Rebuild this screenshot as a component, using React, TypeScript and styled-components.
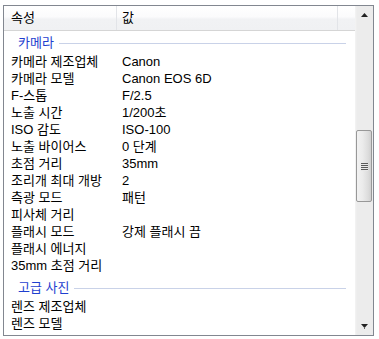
import React from "react";
import styled, { createGlobalStyle } from "styled-components";

const Global = createGlobalStyle`
  html, body { margin: 0; padding: 0; background: #ffffff; }
  body { font-family: "Liberation Sans", "Noto Sans CJK KR", sans-serif; font-size: 13px; color: #000; }
`;

const Page = styled.div`
  padding: 5px 0 0 3px;
`;

const Frame = styled.div`
  width: 369px;
  height: 329px;
  border: 1px solid #828790;
  display: flex;
  overflow: hidden;
  background: #fff;
`;

const Main = styled.div`
  width: 351px;
  display: flex;
  flex-direction: column;
  overflow: hidden;
`;

const Header = styled.div`
  height: 24px;
  display: grid;
  grid-template-columns: 113px 221px 1fr;
  border-bottom: 1px solid #d5d5d5;
  background: linear-gradient(to bottom, #ffffff 0%, #fbfbfc 45%, #f1f2f4 55%, #f0f1f3 100%);
`;

const HeaderCell = styled.div<{ $pad: number }>`
  display: flex;
  align-items: center;
  padding-left: ${(p) => p.$pad}px;
  border-right: 1px solid #e2e4e8;
  line-height: 16px;
`;

const Body = styled.div`
  padding-top: 2px;
  display: flex;
  flex-direction: column;
`;

const GroupHeader = styled.div<{ $first?: boolean }>`
  height: 20px;
  line-height: 16px;
  margin-top: ${(p) => (p.$first ? 0 : 4)}px;
  display: flex;
  align-items: center;
  padding-left: 14px;
  padding-right: 9px;
  color: #1f3fcf;
`;

const GroupLine = styled.div`
  flex: 1;
  height: 1px;
  margin-left: 5px;
  background: #c9d2e8;
`;

const Row = styled.div`
  height: 17px;
  line-height: 16px;
  display: grid;
  grid-template-columns: 113px 1fr;
  align-items: center;
  white-space: nowrap;
`;

const NameCell = styled.div`
  padding-left: 7px;
`;

const ValueCell = styled.div`
  padding-left: 5px;
`;

const ScrollBar = styled.div`
  width: 18px;
  display: flex;
  flex-direction: column;
  background: linear-gradient(to right, #f4f4f4 0px, #ececec 2px, #ececec 100%);
`;

const ArrowButton = styled.div`
  height: 17px;
  display: flex;
  align-items: center;
  justify-content: center;
`;

const Track = styled.div`
  flex: 1;
  padding: 107px 1px 0 1px;
`;

const Thumb = styled.div`
  height: 70px;
  border: 1px solid #989898;
  border-radius: 2px;
  background: linear-gradient(to right, #f2f2f2 0%, #ebebeb 40%, #dcdcdc 80%, #d0d0d0 100%);
  display: flex;
  align-items: center;
  justify-content: center;
`;

const Grip = styled.div`
  width: 7px;
  display: flex;
  flex-direction: column;
  gap: 1px;
`;

const GripLine = styled.div`
  height: 1px;
  background: #5a5a5a;
  box-shadow: 0 1px 0 #e8e8e8;
`;

type Item = [string, string];

const camera: Item[] = [
  ["카메라 제조업체", "Canon"],
  ["카메라 모델", "Canon EOS 6D"],
  ["F-스톱", "F/2.5"],
  ["노출 시간", "1/200초"],
  ["ISO 감도", "ISO-100"],
  ["노출 바이어스", "0 단계"],
  ["초점 거리", "35mm"],
  ["조리개 최대 개방", "2"],
  ["측광 모드", "패턴"],
  ["피사체 거리", ""],
  ["플래시 모드", "강제 플래시 끔"],
  ["플래시 에너지", ""],
  ["35mm 초점 거리", ""],
];

const advanced: Item[] = [
  ["렌즈 제조업체", ""],
  ["렌즈 모델", ""],
];

const Rows = ({ items }: { items: Item[] }) => (
  <>
    {items.map(([n, v]) => (
      <Row key={n}>
        <NameCell>{n}</NameCell>
        <ValueCell>{v}</ValueCell>
      </Row>
    ))}
  </>
);

export default function App() {
  return (
    <>
      <Global />
      <Page>
        <Frame>
          <Main>
            <Header>
              <HeaderCell $pad={7}>속성</HeaderCell>
              <HeaderCell $pad={5}>값</HeaderCell>
              <div />
            </Header>
            <Body>
              <GroupHeader $first>
                카메라
                <GroupLine />
              </GroupHeader>
              <Rows items={camera} />
              <GroupHeader>
                고급 사진
                <GroupLine />
              </GroupHeader>
              <Rows items={advanced} />
            </Body>
          </Main>
          <ScrollBar>
            <ArrowButton>
              <svg width="7" height="4" viewBox="0 0 7 4">
                <path d="M3.5 0 L7 4 L0 4 Z" fill="#222" />
              </svg>
            </ArrowButton>
            <Track>
              <Thumb>
                <Grip>
                  <GripLine />
                  <GripLine />
                  <GripLine />
                  <GripLine />
                </Grip>
              </Thumb>
            </Track>
            <ArrowButton>
              <svg width="7" height="5" viewBox="0 0 7 5">
                <path d="M0 0 L7 0 L3.5 4 Z" fill="#222" />
                <rect x="3" y="3" width="1" height="2" fill="#666" />
              </svg>
            </ArrowButton>
          </ScrollBar>
        </Frame>
      </Page>
    </>
  );
}
